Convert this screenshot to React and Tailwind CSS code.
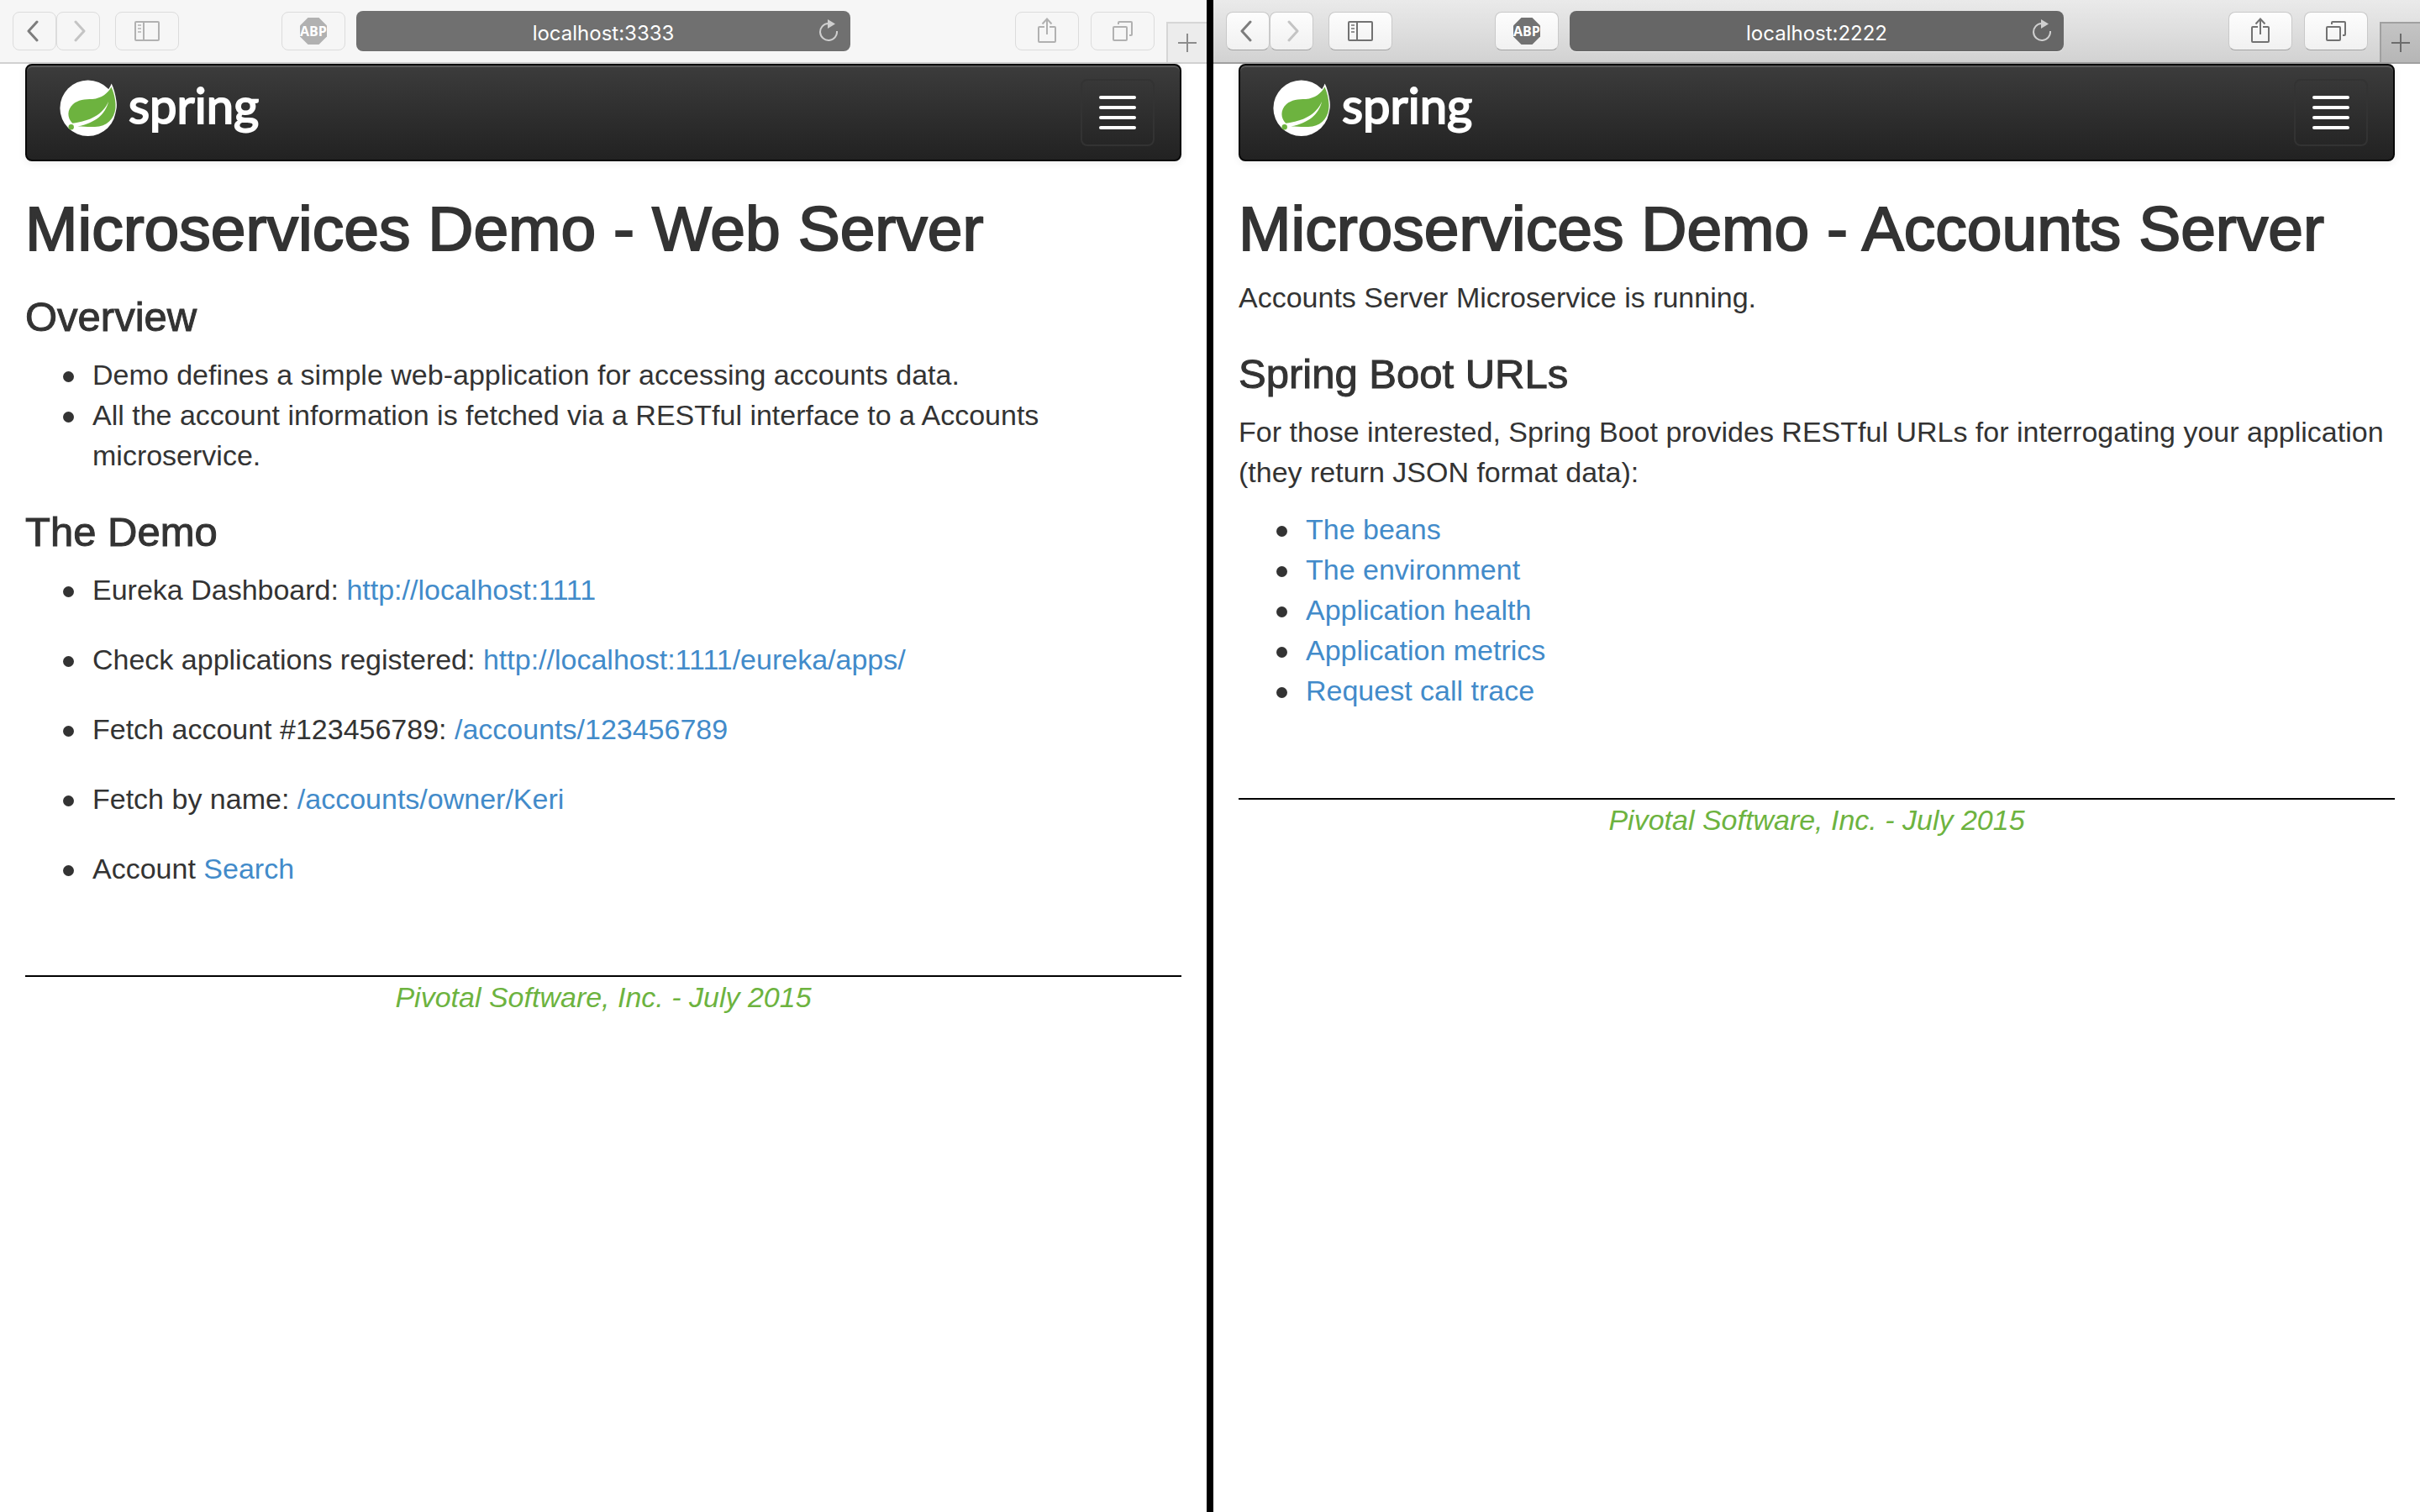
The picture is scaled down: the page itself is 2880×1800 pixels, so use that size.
import React from "react";

function ChevronIcon({ flip, className }) {
  return (
    <svg width="14" height="26" viewBox="0 0 14 26" fill="none" className={className} aria-hidden="true">
      <path
        d={flip ? "M2 2 L12 13 L2 24" : "M12 2 L2 13 L12 24"}
        stroke="currentColor"
        strokeWidth="3"
        strokeLinecap="round"
        strokeLinejoin="round"
      />
    </svg>
  );
}

function SidebarIcon() {
  return (
    <svg width="30" height="24" viewBox="0 0 30 24" fill="none" stroke="currentColor" strokeWidth="2" aria-hidden="true">
      <rect x="1" y="1" width="28" height="22" rx="1" />
      <path d="M11 1V23" />
      <path d="M4 5H8M4 9H8M4 13H8" strokeOpacity="0.75" />
    </svg>
  );
}

function AbpIcon() {
  return (
    <svg width="32" height="32" viewBox="0 0 32 32" aria-hidden="true">
      <path d="M9.5 0H22.5L32 9.5V22.5L22.5 32H9.5L0 22.5V9.5Z" fill="currentColor" />
      <text
        x="16"
        y="22"
        textAnchor="middle"
        fontFamily="'Liberation Sans Narrow', 'Open Sans', sans-serif"
        fontWeight="700"
        fontSize="16"
        fill="#fff"
      >
        ABP
      </text>
    </svg>
  );
}

function ShareIcon() {
  return (
    <svg width="22" height="30" viewBox="0 0 22 30" fill="none" stroke="currentColor" strokeWidth="2" className="-mt-0.5" aria-hidden="true">
      <path d="M8 11H2Q1 11 1 12V28Q1 29 2 29H20Q21 29 21 28V12Q21 11 20 11H14" />
      <path d="M11 20V1.5M5.5 7.5L11 1.5L16.5 7.5" />
    </svg>
  );
}

function TabsIcon() {
  return (
    <svg width="24" height="24" viewBox="0 0 24 24" fill="none" stroke="currentColor" strokeWidth="2" aria-hidden="true">
      <rect x="1" y="7" width="16" height="16" rx="1" />
      <path d="M7 4V2Q7 1 8 1H22Q23 1 23 2V16Q23 17 22 17H20" />
    </svg>
  );
}

function ReloadIcon() {
  return (
    <svg width="22" height="28" viewBox="0 0 22 28" aria-hidden="true">
      <path d="M10.5 5A10 10 0 1 0 21 14" fill="none" stroke="currentColor" strokeWidth="2" />
      <path d="M10 0V11L19 5.5Z" fill="currentColor" />
    </svg>
  );
}

function PlusIcon() {
  return (
    <svg width="22" height="22" viewBox="0 0 22 22" stroke="currentColor" strokeWidth="2" aria-hidden="true">
      <path d="M11 0V22M0 11H22" />
    </svg>
  );
}

function ToolButton({ label, active, wide, children }) {
  return (
    <button
      type="button"
      aria-label={label}
      className={
        "flex h-[46px] shrink-0 items-center justify-center rounded-lg border " +
        (wide ? "w-[76px] " : "w-[52px] ") +
        (active
          ? "border-[#c9c9c9] border-b-[#a3a3a3] bg-linear-to-b from-[#fdfdfd] to-[#f1f1f1] text-[#727272]"
          : "border-[#dcdcdc] bg-[#f6f6f6] text-[#b1b1b1]")
      }
    >
      {children}
    </button>
  );
}

function Toolbar({ url, active }) {
  return (
    <header
      className={
        "grid h-[76px] grid-cols-[minmax(0,1fr)_41%_minmax(0,1fr)] items-stretch border-b-2 " +
        (active ? "border-[#a0a0a0] bg-linear-to-b from-[#eaeaea] to-[#d2d2d2]" : "border-[#d1d1d1] bg-[#f6f6f6]")
      }
    >
      <div className="flex items-center pr-[13px] pl-[15px]">
        <ToolButton label="Back" active={active}>
          <ChevronIcon className="mr-1 text-[#7d7d7d]" />
        </ToolButton>
        <ToolButton label="Forward" active={active}>
          <ChevronIcon flip className="ml-1 text-[#c4c4c4]" />
        </ToolButton>
        <div className="ml-[18px]">
          <ToolButton label="Show sidebar" active={active} wide>
            <SidebarIcon />
          </ToolButton>
        </div>
        <div className="ml-auto">
          <ToolButton label="Adblock Plus" active={active} wide>
            <AbpIcon />
          </ToolButton>
        </div>
      </div>
      <div
        className={
          "relative my-auto flex h-12 items-center rounded-lg shadow-[0_1px_0_#ffffff80] " +
          (active ? "bg-[#666666]" : "bg-[#707070]")
        }
      >
        <input
          type="text"
          aria-label="Address"
          defaultValue={url}
          className="h-full w-full rounded-lg bg-transparent pt-1 text-center font-[Inter,sans-serif] text-[24px] text-white outline-none"
        />
        <button type="button" aria-label="Reload" className="absolute right-[15px] text-[#cfcfcf]">
          <ReloadIcon />
        </button>
      </div>
      <div className="flex items-center justify-end gap-[14px]">
        <ToolButton label="Share" active={active} wide>
          <ShareIcon />
        </ToolButton>
        <ToolButton label="Show all tabs" active={active} wide>
          <TabsIcon />
        </ToolButton>
        <button
          type="button"
          aria-label="New tab"
          className={
            "flex h-12 w-12 items-center justify-center self-end border-t-2 border-l-2 " +
            (active
              ? "border-[#a0a0a0] bg-linear-to-b from-[#c4c4c4] to-[#b6b6b6] text-[#6c6c6c]"
              : "border-[#d6d6d6] bg-[#ececec] text-[#8c8c8c]")
          }
        >
          <PlusIcon />
        </button>
      </div>
    </header>
  );
}

const LEAF =
  "M61.5 8.5C57.5 16 50 22 39 23C30 23.3 22 23.5 15.7 29.3C9 35.5 8.5 45 15.2 51.7C36 49 51 42 58.2 25.7C54 41.5 43 51 21.3 55.6C32 56 39 56.5 47 55.5C60 53 67.3 42 66.5 29C66 21.5 64.5 15 61.5 8.5Z";

function SpringLogo() {
  return (
    <a href="#spring" className="mt-[17px] ml-[39px] flex h-[68px] items-center gap-[14px]" aria-label="Spring home">
      <svg width="68" height="68" viewBox="0 0 68 68" className="overflow-visible" aria-hidden="true">
        <circle cx="33.7" cy="33.7" r="33.3" fill="#fff" />
        <path d="M61.7 4.5C58 14 52 18 42 21.5L55 50C66 44 69 36 67.6 26C66.5 18 64.5 10 61.7 4.5Z" fill="#fff" />
        <path d={LEAF} fill="#6db33f" />
        <circle cx="13.7" cy="56.3" r="3.2" fill="#6db33f" />
      </svg>
      <span className="pb-2 font-[Lato,sans-serif] text-[58px] leading-[60px] text-white [-webkit-text-stroke:2px_#ffffff]">
        spring
      </span>
    </a>
  );
}

function NavBar() {
  return (
    <nav className="flex items-start justify-between rounded-lg border-2 border-[#080808] bg-linear-to-b from-[#3c3c3c] to-[#222222] shadow-[inset_0_2px_0_#ffffff26,0_2px_10px_#00000013]">
      <SpringLogo />
      <button
        type="button"
        aria-label="Toggle navigation"
        className="my-4 mr-[30px] flex flex-col gap-2 rounded-lg border-2 border-[#333333] px-5 py-[18px]"
      >
        <span className="h-1 w-11 rounded-xs bg-white" />
        <span className="h-1 w-11 rounded-xs bg-white" />
        <span className="h-1 w-11 rounded-xs bg-white" />
        <span className="h-1 w-11 rounded-xs bg-white" />
      </button>
    </nav>
  );
}

function Title({ children }) {
  return (
    <h1 className="mt-[41px] mb-[18px] text-[75px] leading-[79px] [-webkit-text-stroke:2px_#333333]">{children}</h1>
  );
}

function Heading({ children }) {
  return (
    <h3 className="mt-[39px] mb-[18px] text-[49px] leading-[53px] [-webkit-text-stroke:1px_#333333]">{children}</h3>
  );
}

function Bullet({ children }) {
  return (
    <li className="flex items-start">
      <span className="mt-5 mr-[22px] size-[13px] shrink-0 rounded-full bg-[#333333]" />
      <div>{children}</div>
    </li>
  );
}

function Link({ href, children }) {
  return (
    <a href={href} className="text-[#428bca]">
      {children}
    </a>
  );
}

function Footer() {
  return (
    <footer className="border-t-2 border-black text-center text-[#6db33f] italic">
      Pivotal Software, Inc. - July 2015
    </footer>
  );
}

function BrowserWindow({ url, active, children }) {
  return (
    <section className="min-w-0 flex-1 bg-white">
      <Toolbar url={url} active={active} />
      <div className="px-[30px] font-['Liberation_Sans',Arial,sans-serif] text-[34px] leading-[48px] text-[#333333]">
        <NavBar />
        {children}
        <Footer />
      </div>
    </section>
  );
}

const DEMO_LINKS = [
  ["Eureka Dashboard:", "http://localhost:1111", "http://localhost:1111"],
  ["Check applications registered:", "http://localhost:1111/eureka/apps/", "http://localhost:1111/eureka/apps/"],
  ["Fetch account #123456789:", "/accounts/123456789", "/accounts/123456789"],
  ["Fetch by name:", "/accounts/owner/Keri", "/accounts/owner/Keri"],
  ["Account", "Search", "/accounts/search"],
];

const BOOT_LINKS = [
  ["The beans", "/beans"],
  ["The environment", "/env"],
  ["Application health", "/health"],
  ["Application metrics", "/metrics"],
  ["Request call trace", "/trace"],
];

export default function App() {
  return (
    <main className="flex min-h-screen gap-2 bg-black">
      <BrowserWindow url="localhost:3333">
        <Title>Microservices Demo - Web Server</Title>
        <Heading>Overview</Heading>
        <ul className="mb-[41px] pl-[45px]">
          <Bullet>Demo defines a simple web-application for accessing accounts data.</Bullet>
          <Bullet>All the account information is fetched via a RESTful interface to a Accounts microservice.</Bullet>
        </ul>
        <Heading>The Demo</Heading>
        <ul className="mb-[103px] flex flex-col gap-[35px] pl-[45px]">
          {DEMO_LINKS.map(([text, label, href]) => (
            <Bullet key={label}>
              {text} <Link href={href}>{label}</Link>
            </Bullet>
          ))}
        </ul>
      </BrowserWindow>
      <BrowserWindow url="localhost:2222" active>
        <Title>Microservices Demo - Accounts Server</Title>
        <p className="mb-[41px]">Accounts Server Microservice is running.</p>
        <Heading>Spring Boot URLs</Heading>
        <p>
          For those interested, Spring Boot provides RESTful URLs for interrogating your application (they return JSON
          format data):
        </p>
        <ul className="mt-5 mb-[104px] pl-[45px]">
          {BOOT_LINKS.map(([label, href]) => (
            <Bullet key={label}>
              <Link href={href}>{label}</Link>
            </Bullet>
          ))}
        </ul>
      </BrowserWindow>
    </main>
  );
}
